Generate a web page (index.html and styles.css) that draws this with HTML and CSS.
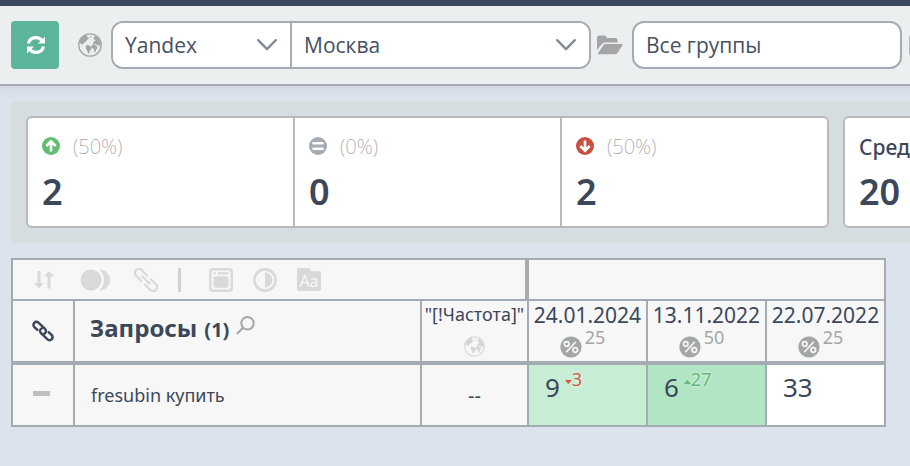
FILE: index.html
```html
<!DOCTYPE html>
<html lang="ru">
<head>
<meta charset="utf-8">
<title>Позиции</title>
<link rel="stylesheet" href="styles.css">
</head>
<body>
<svg class="defs" aria-hidden="true">
  <symbol id="globe" viewBox="0 0 24 24">
    <circle cx="12" cy="12" r="11.2" fill="none" stroke="currentColor" stroke-width="1.3"/>
    <path fill="currentColor" d="M1.500 8.500 3.800 4.500 7.300 2.200l2.200.5-.6 1.500 1.300.4.800 1.300-1.700.7-.9 1.700-1.800.8-.6 1.300-1.500.1.300 1.200-1.600-.5-1.200-1.600z"/>
    <path fill="currentColor" d="m8.200 12.200 2-.2 1.500 1 1.900.9.200 1.500-1.400 1.500-.9 2.300-1.300 1.500-.9-3-1.300-2-.3-2z"/>
    <path fill="currentColor" d="m15.800 4.300 1.700-1.600 2.800 2.600 1.900 3.500.2 3-.9 1.600-.9-1.500-1.200-.4-.5 1-1-1.200-1.500-.5-1.400.2.200-1.700 1.400-1.300 1.200-.4-.8-1.200-1.600.2z"/>
    <path fill="currentColor" d="m14.800 11.400 2 .2 1.500 1.500 1.300.4-.3 1.700-1.200 1.300-.3 2-1.200 1-.8-2.700-.6-1.500-1.400-.6-.3-1.800z"/>
    <circle cx="12.800" cy="4" r=".8" fill="currentColor"/>
  </symbol>
  <symbol id="chain" viewBox="0 0 22 22">
    <g fill="none" stroke="currentColor" stroke-width="2.500" stroke-linecap="round" transform="rotate(43 11 11)">
      <path d="M6 14H2a3 3 0 0 1 0-6h9a3 3 0 0 1 2.600 4.500"/>
      <path d="M16 8h4a3 3 0 0 1 0 6h-9a3 3 0 0 1-2.600-4.500"/>
    </g>
  </symbol>
  <symbol id="percent" viewBox="0 0 22 22">
    <circle cx="11" cy="11" r="10.6" fill="currentColor"/>
    <g fill="none" stroke="#f7f7f7" stroke-width="1.7"><circle cx="6.7" cy="8" r="2.3"/><circle cx="15.3" cy="14" r="2.3"/><path d="M15.8 5.7 6.2 16.3"/></g>
  </symbol>
  <symbol id="chevron" viewBox="0 0 20 12">
    <path d="m1.2 1.2 8.8 9 8.8-9" fill="none" stroke="currentColor" stroke-width="2.4" stroke-linecap="round" stroke-linejoin="round"/>
  </symbol>
</svg>

<header class="toolbar">
  <button class="refresh" type="button" aria-label="Обновить">
    <svg width="20" height="20" viewBox="0 0 20 20" fill="none" stroke="currentColor" stroke-width="3.2">
      <path d="M2.500 8.500C3.300 4.600 6.500 2.600 10 2.600c2.600 0 4.600 1.100 6 2.900M17.500 11.500c-.8 3.900-4 5.900-7.500 5.900-2.600 0-4.600-1.100-6-2.900"/>
      <path d="M19 1.500v7h-7zM1 18.500v-7h7z" fill="currentColor" stroke="none"/>
    </svg>
  </button>
  <svg class="globe" aria-hidden="true"><use href="#globe"/></svg>
  <div class="pair">
    <div class="field engine">
      <select aria-label="Поисковая система"><option>Yandex</option></select>
      <svg class="chevron" aria-hidden="true"><use href="#chevron"/></svg>
    </div>
    <div class="field region">
      <select aria-label="Регион"><option>Москва</option></select>
      <svg class="chevron" aria-hidden="true"><use href="#chevron"/></svg>
    </div>
  </div>
  <svg class="folder" viewBox="0 0 26 20" aria-hidden="true">
    <path fill="currentColor" d="M0 15V2.800C0 1.200 1 .4 2.400.4h5C9 .4 9.600 1.400 9.800 3h8.400c1.500 0 2.400.9 2.400 2.400v2.200H9c-2 0-3.400.6-4.700 2.100zM8.800 9H24.500c1 0 1.300.6.800 1.400l-4.500 7c-.6 1-1.600 1.800-3 1.800H2c-1 0-1.300-.7-.7-1.500l5-7.300C7 9.400 7.700 9 8.800 9z"/>
  </svg>
  <input class="groups" type="text" value="Все группы" aria-label="Группы">
  <span class="more"></span>
</header>

<main>
  <section class="summary">
    <div class="cards">
      <div class="card">
        <div class="share">
          <svg class="badge up" viewBox="0 0 18 18"><circle cx="9" cy="9" r="9" fill="currentColor"/><path d="M9 14.500V5M4.300 9 9 4.300 13.700 9" fill="none" stroke="#fff" stroke-width="2.600"/></svg>
          <span>(50%)</span>
        </div>
        <strong>2</strong>
      </div>
      <div class="card">
        <div class="share">
          <svg class="badge same" viewBox="0 0 18 18"><circle cx="9" cy="9" r="9" fill="currentColor"/><path d="M4.500 6.300h9M4.500 11.700h9" stroke="#fff" stroke-width="2.600" stroke-linecap="round"/></svg>
          <span>(0%)</span>
        </div>
        <strong>0</strong>
      </div>
      <div class="card">
        <div class="share">
          <svg class="badge down" viewBox="0 0 18 18"><circle cx="9" cy="9" r="9" fill="currentColor"/><path d="M9 3.500V13M4.300 9 9 13.700 13.700 9" fill="none" stroke="#fff" stroke-width="2.600"/></svg>
          <span>(50%)</span>
        </div>
        <strong>2</strong>
      </div>
    </div>
    <div class="cards average">
      <div class="card">
        <div class="label">Сред</div>
        <strong>20</strong>
      </div>
    </div>
  </section>

  <table>
    <colgroup><col class="c-mark"><col><col class="c-freq"><col class="c-date"><col class="c-date"><col class="c-date"></colgroup>
    <thead>
      <tr class="tools-row">
        <td colspan="3" class="tools-cell">
          <div class="tools">
            <svg width="20" height="18" viewBox="0 0 20 18" fill="currentColor"><path d="M3.500 0h3v12H10l-5 5.500L0 12h3.500zM13.500 17.500h3v-12H20L15 0l-5 5.500h3.500z"/></svg>
            <svg width="31" height="22" viewBox="0 0 31 22" fill="currentColor"><circle cx="11" cy="11" r="10.500"/><path d="M19 .6c6 0 11 4.600 11 10.400s-5 10.400-11 10.400c3.200-2.400 5-6 5-10.400S22.200 3 19 .6z"/></svg>
            <svg width="24" height="24" viewBox="0 0 24 24" fill="none" stroke="currentColor" stroke-width="2.200" stroke-linecap="round"><g transform="rotate(45 12 12)"><path d="M9 16H2a4 4 0 0 1 0-8h7.500M15 8h7a4 4 0 0 1 0 8h-7.500M7 12h10"/></g></svg>
            <span class="bar"></span>
            <svg width="24" height="24" viewBox="0 0 24 24"><rect x="1.300" y="1.300" width="21.400" height="21.400" rx="2.500" fill="none" stroke="currentColor" stroke-width="2.400"/><path fill="currentColor" d="M4.500 4.300h2.200v2.200H4.500zM8.500 4.300h11v2.200h-11z"/><rect x="4.500" y="8.300" width="15" height="11.500" rx="2" fill="currentColor"/></svg>
            <svg width="24" height="24" viewBox="0 0 24 24"><circle cx="12" cy="12" r="10.600" fill="none" stroke="currentColor" stroke-width="2.600"/><path d="M12 4.500a7.500 7.500 0 0 1 0 15z" fill="currentColor"/></svg>
            <span class="case">Aa</span>
          </div>
        </td>
        <td colspan="3"></td>
      </tr>
      <tr class="head-row">
        <th><svg class="link" aria-label="Ссылка"><use href="#chain"/></svg></th>
        <th class="queries">
          <div class="title"><span>Запросы</span><small>(1)</small>
            <svg width="19" height="19" viewBox="0 0 19 19" fill="none" stroke="currentColor" stroke-width="2"><circle cx="11.500" cy="7.300" r="6.200"/><path d="M7 11.700.8 18"/></svg>
          </div>
        </th>
        <th><div class="freq"><span>"[!Частота]"</span><svg class="small-globe" aria-hidden="true"><use href="#globe"/></svg></div></th>
        <th><div class="date"><span>24.01.2024</span><div class="pct"><svg><use href="#percent"/></svg><span>25</span></div></div></th>
        <th><div class="date"><span>13.11.2022</span><div class="pct"><svg><use href="#percent"/></svg><span>50</span></div></div></th>
        <th><div class="date"><span>22.07.2022</span><div class="pct"><svg><use href="#percent"/></svg><span>25</span></div></div></th>
      </tr>
    </thead>
    <tbody>
      <tr>
        <td><span class="dash"></span></td>
        <td class="query">fresubin купить</td>
        <td class="none">--</td>
        <td class="top10"><div class="pos"><span>9</span><span class="delta fall">3</span></div></td>
        <td class="top10 best"><div class="pos"><span>6</span><span class="delta rise">27</span></div></td>
        <td class="plain"><div class="pos"><span>33</span></div></td>
      </tr>
    </tbody>
  </table>
</main>
</body>
</html>
```
FILE: styles.css
```css
* { box-sizing: border-box; }

body {
  margin: 0;
  background: #dde3ed;
  color: #3c475a;
  font-family: "Noto Sans", "Open Sans", sans-serif;
  font-size: 20px;
  overflow-x: hidden;
}

svg { display: block; flex: none; }
.defs { position: absolute; width: 0; height: 0; }

.toolbar {
  display: flex;
  align-items: center;
  height: 86px;
  padding-left: 11px;
  overflow: hidden;
  background: #ebeff0;
  border-top: 6px solid #39475f;
  border-bottom: 2px solid #a5abb5;
}
.refresh {
  display: grid;
  place-items: center;
  flex: none;
  width: 48px;
  height: 48px;
  padding: 0 0 0 2px;
  border: 0;
  border-radius: 4px;
  background: #5cb59a;
  color: #fff;
}
.globe { width: 24px; height: 24px; margin: 0 9px 0 19px; color: #a3a5a6; }
.pair {
  display: flex;
  flex: none;
  width: 480px;
  height: 48px;
  border: 2px solid #a5abb2;
  border-radius: 12px;
  background: #fff;
  overflow: hidden;
}
.field { display: grid; align-items: center; }
.field > * { grid-area: 1 / 1; }
.engine { width: 179px; border-right: 2px solid #a5abb2; }
.region { flex: 1; }
select, .groups {
  width: 100%;
  height: 44px;
  padding: 0 12px;
  border: 0;
  appearance: none;
  background: #fff;
  color: #465062;
  font: 21px "Open Sans", "Noto Sans", sans-serif;
}
.chevron {
  width: 20px;
  height: 12px;
  margin-right: 13px;
  justify-self: end;
  color: #858b97;
  pointer-events: none;
}
.folder { width: 26px; height: 20px; margin: 0 9px 0 6px; color: #a3a5a6; }
.groups {
  flex: none;
  width: 270px;
  height: 48px;
  border: 2px solid #a5abb2;
  border-radius: 12px;
}
.more { flex: none; width: 24px; height: 20px; margin-left: 7px; border-radius: 2px; background: #b5b8bb; }

main { padding: 15px 0 0 11px; background: linear-gradient(#d3d8e3, #dde3ed 12px); }

.summary {
  display: flex;
  gap: 14px;
  padding: 15px;
  height: 142px;
  overflow: hidden;
  border-radius: 6px 0 0 6px;
  background: #d6dde0;
}
.cards {
  display: flex;
  flex: none;
  width: 803px;
  border: 2px solid #b8b9ba;
  border-radius: 6px;
  background: #fff;
}
.average { width: 270px; }
.card { flex: 1; padding: 15px 14px; }
.card + .card { border-left: 2px solid #b8b9ba; }
.share { display: flex; align-items: center; gap: 13px; height: 26px; color: #a3a7ac; font-weight: 200; }
.badge { width: 18px; height: 18px; }
.up { color: #62bd70; }
.same { color: #a5abb0; }
.down { color: #c94f41; }
.label { height: 26px; line-height: 28px; font-size: 21px; font-weight: 500; }
.card strong { display: block; font-size: 36px; line-height: 66px; font-weight: 600; }

table {
  width: calc(100% - 24px);
  margin-top: 15px;
  table-layout: fixed;
  border-spacing: 0;
  border: solid #a5abb2;
  border-width: 2px 0 0 2px;
}
.c-mark { width: 62px; }
.c-freq { width: 107px; }
.c-date { width: 119px; }
th, td {
  padding: 0;
  border: solid #a5abb2;
  border-width: 0 2px 2px 0;
  background: #f7f7f7;
  font-weight: 400;
}
.tools-row td { height: 41px; }
.tools-row .tools-cell { border-right-width: 4px; }
.head-row th { height: 64px; border-bottom-width: 4px; }
tbody td { height: 62px; }

.tools { display: flex; align-items: center; padding-left: 21px; color: #d8d9da; }
.tools > :nth-child(2) { margin-left: 26px; }
.tools > :nth-child(3) { margin-left: 23px; }
.bar { width: 3px; height: 24px; margin: 0 28px 0 20px; background: #d0d2d4; }
.tools > :nth-child(6) { margin: 0 20px; }
.case {
  width: 24px;
  height: 23px;
  padding-top: 2px;
  border-radius: 2px;
  background: #d8d9da;
  color: #f7f7f7;
  clip-path: polygon(0 0, 50% 0, 60% 14%, 100% 14%, 100% 100%, 0 100%);
  font-size: 16px;
  line-height: 22px;
  text-align: center;
}

.link { width: 22px; height: 22px; margin: 0 auto; }
.title { display: flex; align-items: baseline; height: 38px; padding-left: 15px; font-size: 24px; font-weight: 700; line-height: 32px; }
.title small { margin-left: 7px; font-size: 20px; }
.title svg { align-self: flex-start; margin: 4px 0 0 7px; color: #a5a8ab; }
.freq, .date { display: flex; flex-direction: column; align-items: center; height: 60px; white-space: nowrap; }
.freq { font-size: 18px; line-height: 26px; }
.small-globe { width: 21px; height: 21px; margin-top: 9px; color: #d5d6d7; }
.date { font-size: 21px; line-height: 28px; }
.pct { display: flex; gap: 3px; margin-left: -10px; color: #a3a7a6; font-size: 18px; line-height: 16px; }
.pct svg { width: 22px; height: 22px; margin-top: 7px; }

.dash { display: block; width: 17px; height: 5px; margin: -4px 0 0 20px; background: #bfc0c1; }
.query { padding-left: 16px; font-size: 18px; }
.none { text-align: center; }
td.top10 { background: #c8edd5; }
td.best { background: #b0e6c4; }
td.plain { background: #fff; }
.pos { display: flex; gap: 5px; height: 60px; padding-left: 16px; font-size: 26px; line-height: 44px; }
.delta { display: flex; align-items: center; height: 28px; font-size: 18px; line-height: 28px; text-shadow: 0 0 3px #fff; }
.delta::before { content: ""; width: 7px; height: 4px; margin-top: 6px; background: currentColor; }
.fall { color: #d0563f; }
.fall::before { clip-path: polygon(0 0, 100% 0, 50% 100%); }
.rise { color: #62b874; }
.rise::before { clip-path: polygon(0 100%, 100% 100%, 50% 0); }
```
